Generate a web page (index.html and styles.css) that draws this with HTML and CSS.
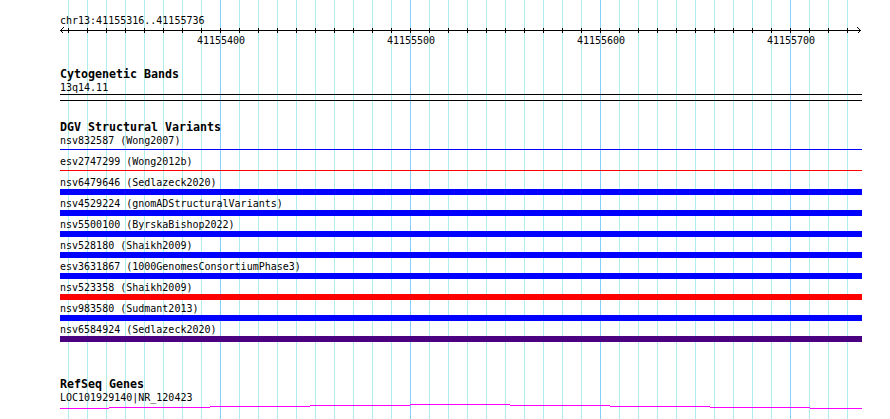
FILE: index.html
```html
<!DOCTYPE html>
<html lang="en">
<head>
<meta charset="utf-8">
<title>chr13:41155316..41155736</title>
<link rel="stylesheet" href="styles.css">
</head>
<body>
<svg class="grid" width="890" height="419" viewBox="0 0 890 419" aria-hidden="true">
  <g class="grid-minor">
    <line x1="68.5" y1="0" x2="68.5" y2="419"/><line x1="87.5" y1="0" x2="87.5" y2="419"/>
    <line x1="106.5" y1="0" x2="106.5" y2="419"/><line x1="125.5" y1="0" x2="125.5" y2="419"/>
    <line x1="144.5" y1="0" x2="144.5" y2="419"/><line x1="163.5" y1="0" x2="163.5" y2="419"/>
    <line x1="182.5" y1="0" x2="182.5" y2="419"/><line x1="201.5" y1="0" x2="201.5" y2="419"/>
    <line x1="239.5" y1="0" x2="239.5" y2="419"/><line x1="258.5" y1="0" x2="258.5" y2="419"/>
    <line x1="277.5" y1="0" x2="277.5" y2="419"/><line x1="296.5" y1="0" x2="296.5" y2="419"/>
    <line x1="315.5" y1="0" x2="315.5" y2="419"/><line x1="334.5" y1="0" x2="334.5" y2="419"/>
    <line x1="353.5" y1="0" x2="353.5" y2="419"/><line x1="372.5" y1="0" x2="372.5" y2="419"/>
    <line x1="391.5" y1="0" x2="391.5" y2="419"/>
    <line x1="429.5" y1="0" x2="429.5" y2="419"/><line x1="448.5" y1="0" x2="448.5" y2="419"/>
    <line x1="467.5" y1="0" x2="467.5" y2="419"/><line x1="486.5" y1="0" x2="486.5" y2="419"/>
    <line x1="505.5" y1="0" x2="505.5" y2="419"/><line x1="524.5" y1="0" x2="524.5" y2="419"/>
    <line x1="543.5" y1="0" x2="543.5" y2="419"/><line x1="562.5" y1="0" x2="562.5" y2="419"/>
    <line x1="581.5" y1="0" x2="581.5" y2="419"/>
    <line x1="619.5" y1="0" x2="619.5" y2="419"/><line x1="638.5" y1="0" x2="638.5" y2="419"/>
    <line x1="657.5" y1="0" x2="657.5" y2="419"/><line x1="676.5" y1="0" x2="676.5" y2="419"/>
    <line x1="695.5" y1="0" x2="695.5" y2="419"/><line x1="714.5" y1="0" x2="714.5" y2="419"/>
    <line x1="733.5" y1="0" x2="733.5" y2="419"/><line x1="752.5" y1="0" x2="752.5" y2="419"/>
    <line x1="771.5" y1="0" x2="771.5" y2="419"/>
    <line x1="809.5" y1="0" x2="809.5" y2="419"/><line x1="828.5" y1="0" x2="828.5" y2="419"/>
    <line x1="847.5" y1="0" x2="847.5" y2="419"/>
  </g>
  <g class="grid-major">
    <line x1="220.5" y1="0" x2="220.5" y2="419"/><line x1="410.5" y1="0" x2="410.5" y2="419"/>
    <line x1="600.5" y1="0" x2="600.5" y2="419"/><line x1="790.5" y1="0" x2="790.5" y2="419"/>
  </g>
</svg>

<main class="panel">
  <section class="ruler">
    <div class="ruler-title mono">chr13:41155316..41155736</div>
    <svg class="ruler-axis" width="802" height="20" viewBox="0 0 802 20">
      <g class="axis-lines">
        <line x1="0" y1="3.5" x2="801" y2="3.5"/>
        <polyline points="3.5,0.5 0.5,3.5 3.5,6.5"/>
        <polyline points="797.5,0.5 800.5,3.5 797.5,6.5"/>
        <line x1="8.5" y1="1" x2="8.5" y2="6"/><line x1="27.5" y1="1" x2="27.5" y2="6"/>
        <line x1="46.5" y1="1" x2="46.5" y2="6"/><line x1="65.5" y1="1" x2="65.5" y2="6"/>
        <line x1="84.5" y1="1" x2="84.5" y2="6"/><line x1="103.5" y1="1" x2="103.5" y2="6"/>
        <line x1="122.5" y1="1" x2="122.5" y2="6"/><line x1="141.5" y1="1" x2="141.5" y2="6"/>
        <line x1="160.5" y1="1" x2="160.5" y2="6"/><line x1="179.5" y1="1" x2="179.5" y2="6"/>
        <line x1="198.5" y1="1" x2="198.5" y2="6"/><line x1="217.5" y1="1" x2="217.5" y2="6"/>
        <line x1="236.5" y1="1" x2="236.5" y2="6"/><line x1="255.5" y1="1" x2="255.5" y2="6"/>
        <line x1="274.5" y1="1" x2="274.5" y2="6"/><line x1="293.5" y1="1" x2="293.5" y2="6"/>
        <line x1="312.5" y1="1" x2="312.5" y2="6"/><line x1="331.5" y1="1" x2="331.5" y2="6"/>
        <line x1="350.5" y1="1" x2="350.5" y2="6"/><line x1="369.5" y1="1" x2="369.5" y2="6"/>
        <line x1="388.5" y1="1" x2="388.5" y2="6"/><line x1="407.5" y1="1" x2="407.5" y2="6"/>
        <line x1="426.5" y1="1" x2="426.5" y2="6"/><line x1="445.5" y1="1" x2="445.5" y2="6"/>
        <line x1="464.5" y1="1" x2="464.5" y2="6"/><line x1="483.5" y1="1" x2="483.5" y2="6"/>
        <line x1="502.5" y1="1" x2="502.5" y2="6"/><line x1="521.5" y1="1" x2="521.5" y2="6"/>
        <line x1="540.5" y1="1" x2="540.5" y2="6"/><line x1="559.5" y1="1" x2="559.5" y2="6"/>
        <line x1="578.5" y1="1" x2="578.5" y2="6"/><line x1="597.5" y1="1" x2="597.5" y2="6"/>
        <line x1="616.5" y1="1" x2="616.5" y2="6"/><line x1="635.5" y1="1" x2="635.5" y2="6"/>
        <line x1="654.5" y1="1" x2="654.5" y2="6"/><line x1="673.5" y1="1" x2="673.5" y2="6"/>
        <line x1="692.5" y1="1" x2="692.5" y2="6"/><line x1="711.5" y1="1" x2="711.5" y2="6"/>
        <line x1="730.5" y1="1" x2="730.5" y2="6"/><line x1="749.5" y1="1" x2="749.5" y2="6"/>
        <line x1="768.5" y1="1" x2="768.5" y2="6"/><line x1="787.5" y1="1" x2="787.5" y2="6"/>
      </g>
      <g class="axis-labels">
        <text x="161" y="17">41155400</text>
        <text x="351" y="17">41155500</text>
        <text x="541" y="17">41155600</text>
        <text x="731" y="17">41155700</text>
      </g>
    </svg>
  </section>

  <section class="track track-cyto">
    <h2 class="track-title">Cytogenetic Bands</h2>
    <div class="feat-label mono">13q14.11</div>
    <div class="band"></div>
  </section>

  <section class="track track-dgv">
    <h2 class="track-title">DGV Structural Variants</h2>
    <div class="sv-row"><div class="feat-label mono">nsv832587 (Wong2007)</div><div class="sv-glyph"><div class="thin blue"></div></div></div>
    <div class="sv-row"><div class="feat-label mono">esv2747299 (Wong2012b)</div><div class="sv-glyph"><div class="thin red"></div></div></div>
    <div class="sv-row"><div class="feat-label mono">nsv6479646 (Sedlazeck2020)</div><div class="sv-glyph"><div class="bar blue"></div></div></div>
    <div class="sv-row"><div class="feat-label mono">nsv4529224 (gnomADStructuralVariants)</div><div class="sv-glyph"><div class="bar blue"></div></div></div>
    <div class="sv-row"><div class="feat-label mono">nsv5500100 (ByrskaBishop2022)</div><div class="sv-glyph"><div class="bar blue"></div></div></div>
    <div class="sv-row"><div class="feat-label mono">nsv528180 (Shaikh2009)</div><div class="sv-glyph"><div class="bar blue"></div></div></div>
    <div class="sv-row"><div class="feat-label mono">esv3631867 (1000GenomesConsortiumPhase3)</div><div class="sv-glyph"><div class="bar blue"></div></div></div>
    <div class="sv-row"><div class="feat-label mono">nsv523358 (Shaikh2009)</div><div class="sv-glyph"><div class="bar red"></div></div></div>
    <div class="sv-row"><div class="feat-label mono">nsv983580 (Sudmant2013)</div><div class="sv-glyph"><div class="bar blue"></div></div></div>
    <div class="sv-row"><div class="feat-label mono">nsv6584924 (Sedlazeck2020)</div><div class="sv-glyph"><div class="bar indigo"></div></div></div>
  </section>

  <section class="track track-refseq">
    <h2 class="track-title">RefSeq Genes</h2>
    <div class="feat-label mono">LOC101929140|NR_120423</div>
    <svg class="gene" width="802" height="5" viewBox="0 0 802 5">
      <g class="intron">
        <rect x="0" y="4" width="49" height="1"/>
        <rect x="49" y="3" width="101" height="1"/>
        <rect x="150" y="2" width="100" height="1"/>
        <rect x="250" y="1" width="100" height="1"/>
        <rect x="350" y="0" width="100" height="1"/>
        <rect x="450" y="1" width="100" height="1"/>
        <rect x="550" y="2" width="100" height="1"/>
        <rect x="650" y="3" width="100" height="1"/>
        <rect x="750" y="4" width="52" height="1"/>
      </g>
    </svg>
  </section>
</main>
</body>
</html>
```

FILE: styles.css
```css
html, body {
  margin: 0;
  padding: 0;
  background: #ffffff;
}

body {
  position: relative;
  width: 890px;
  height: 419px;
  overflow: hidden;
  color: #000000;
}

.grid {
  position: absolute;
  top: 0;
  left: 0;
  z-index: 0;
  shape-rendering: crispEdges;
}

.grid-minor line {
  stroke: #afeeee;
  stroke-width: 1;
}

.grid-major line {
  stroke: #87cefa;
  stroke-width: 1;
}

.panel {
  position: relative;
  z-index: 1;
  margin-left: 60px;
  width: 802px;
  padding-top: 14px;
}

.mono {
  font-family: "DejaVu Sans Mono", "Liberation Mono", monospace;
  font-size: 10px;
  line-height: 13px;
  white-space: nowrap;
}

.ruler-title {
  height: 13px;
}

.ruler-axis {
  display: block;
}

.axis-lines line,
.axis-lines polyline {
  stroke: #000000;
  stroke-width: 1;
  fill: none;
  shape-rendering: crispEdges;
}

.axis-labels text {
  font-family: "DejaVu Sans Mono", "Liberation Mono", monospace;
  font-size: 10px;
  fill: #000000;
  text-anchor: middle;
}

.track-title {
  margin: 0;
  height: 13px;
  font-family: "DejaVu Sans Mono", "Liberation Mono", monospace;
  font-weight: bold;
  font-size: 11.63px;
  line-height: 13px;
  white-space: nowrap;
}

.feat-label {
  height: 13px;
}

.track-cyto {
  margin-top: 21px;
}

.band {
  box-sizing: border-box;
  height: 7px;
  border-top: 1px solid #000000;
  border-bottom: 1px solid #000000;
}

.track-dgv {
  margin-top: 20px;
}

.sv-row {
  height: 21px;
  display: flex;
  flex-direction: column;
}

.sv-glyph {
  height: 8px;
}

.thin {
  margin-top: 2px;
  height: 1px;
}

.bar {
  height: 6px;
}

.blue { background: #0000ff; }
.red { background: #ff0000; }
.indigo { background: #4b0082; }

.track-refseq {
  margin-top: 34px;
}

.gene {
  display: block;
  shape-rendering: crispEdges;
}

.intron rect {
  fill: #ff00ff;
}
```
